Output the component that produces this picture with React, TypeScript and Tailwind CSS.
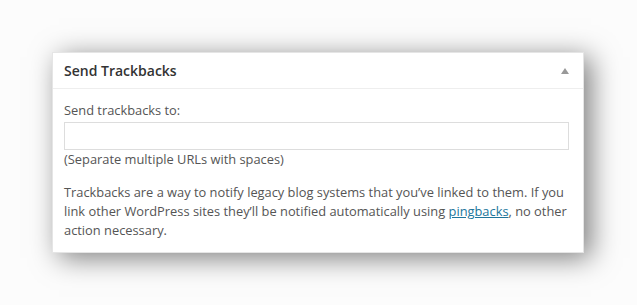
const SendTrackbacks = () => {
  return (
    <div className="w-[532px] h-[201px] bg-white border border-[#e5e5e5] shadow-[7px_5px_26px_rgba(0,0,0,0.5)] flex flex-col">
      <div className="h-[36px] flex items-center justify-between pl-[11px] pr-[14px] border-b border-[#eeeeee]">
        <h2 className="text-[14px] font-semibold text-[#333]">Send Trackbacks</h2>
        <span className="w-0 h-0 border-l-[4px] border-r-[4px] border-b-[6px] border-l-transparent border-r-transparent border-b-[#999]" />
      </div>
      <div className="px-[11px] pt-[12px] text-[12.85px] leading-[19px] text-[#555]">
        <label className="block">Send trackbacks to:</label>
        <div className="mt-[2px] h-[28px] w-[505px] border border-[#dddddd] bg-white" />
        <p>(Separate multiple URLs with spaces)</p>
        <p className="mt-[14px]">
          Trackbacks are a way to notify legacy blog systems that you’ve linked to them. If you
          link other WordPress sites they’ll be notified automatically using{" "}
          <a href="#" className="underline text-[#21759b]">pingbacks</a>, no other action necessary.
        </p>
      </div>
    </div>
  );
};

export default function App() {
  return (
    <div className="w-[637px] h-[305px] bg-[#fcfcfc] pt-[52px] pl-[52px] font-['Open_Sans',sans-serif]">
      <SendTrackbacks />
    </div>
  );
}
